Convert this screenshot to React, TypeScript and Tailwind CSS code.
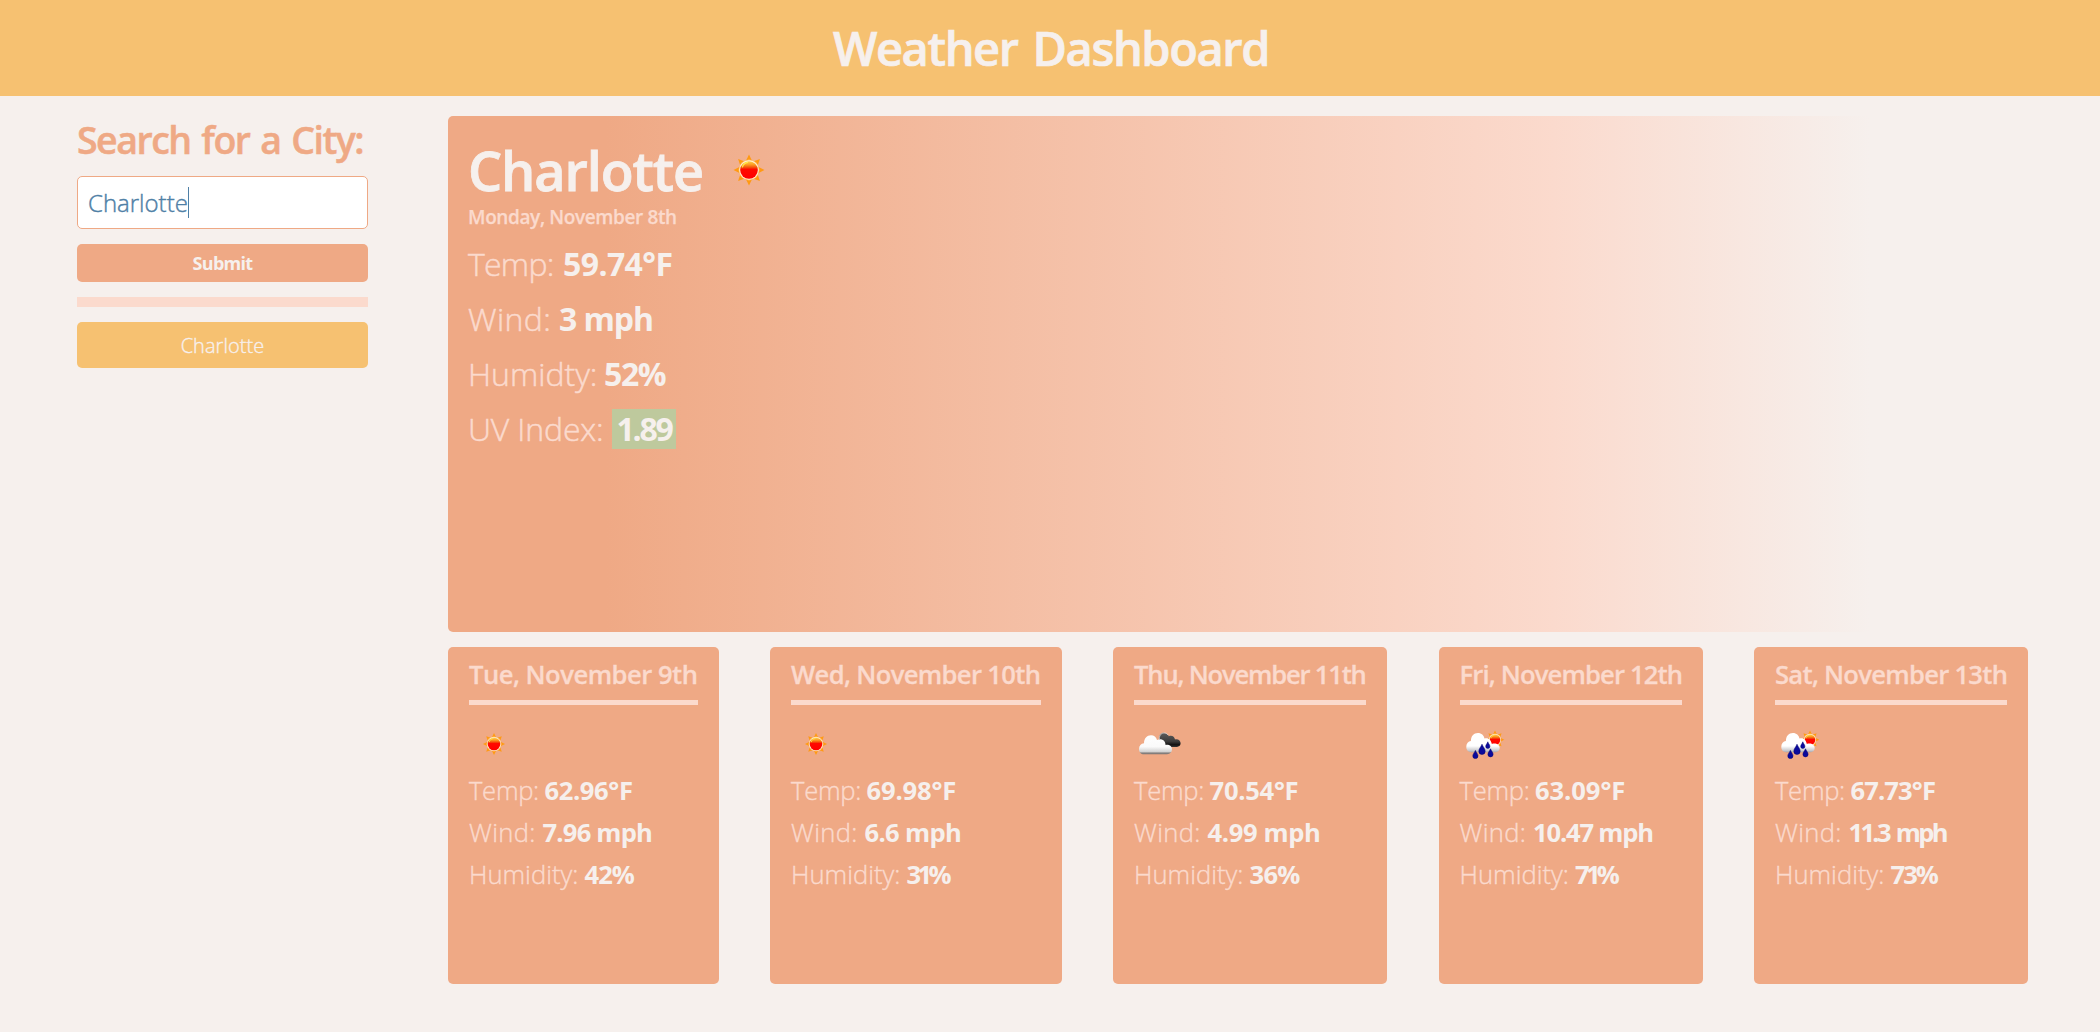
import React from "react";

function SunShape() {
  return (
    <>
      {[0, 45, 90, 135, 180, 225, 270, 315].map((a) => (
        <path key={a} d="M0 -15.4 L2.9 -9.6 L-2.9 -9.6 Z" fill="#ff9a12" transform={`rotate(${a})`} />
      ))}
      <circle r="10.2" fill="#fff0cf" stroke="#ffab45" strokeWidth="0.6" />
      <circle r="8.8" fill="url(#sunFill)" />
      <path d="M-6.6 -2.6 C-6 -5.6 -4 -7.2 -1 -7.6" fill="none" stroke="#ffe94a" strokeWidth="1.1" />
    </>
  );
}

function Defs() {
  return (
    <svg className="absolute h-0 w-0" aria-hidden="true">
      <defs>
        <linearGradient id="sunFill" x1="0" y1="0" x2="0" y2="1">
          <stop offset="0" stopColor="#ffcf50" />
          <stop offset="0.2" stopColor="#fb9a20" />
          <stop offset="0.36" stopColor="#f44c0c" />
          <stop offset="0.46" stopColor="#ff0a00" />
          <stop offset="1" stopColor="#ff0000" />
        </linearGradient>
        <linearGradient id="cloudFill" gradientUnits="userSpaceOnUse" x1="0" y1="0" x2="0" y2="19">
          <stop offset="0" stopColor="#ffffff" />
          <stop offset="0.6" stopColor="#fafafa" />
          <stop offset="0.86" stopColor="#d2d2d2" />
          <stop offset="0.93" stopColor="#8a8583" />
          <stop offset="1" stopColor="#777270" />
        </linearGradient>
        <linearGradient id="rainCloud" gradientUnits="userSpaceOnUse" x1="0" y1="0" x2="0" y2="20">
          <stop offset="0" stopColor="#ffffff" />
          <stop offset="0.65" stopColor="#ffffff" />
          <stop offset="0.9" stopColor="#c4c4c8" />
          <stop offset="1" stopColor="#8f8f94" />
        </linearGradient>
        <linearGradient id="darkCloud" x1="0" y1="0" x2="0" y2="1">
          <stop offset="0" stopColor="#5c5c5c" />
          <stop offset="0.6" stopColor="#3c3c3c" />
          <stop offset="0.85" stopColor="#111111" />
          <stop offset="1" stopColor="#333333" />
        </linearGradient>
      </defs>
    </svg>
  );
}

function Sun({ className }: { className: string }) {
  return (
    <svg viewBox="-35 -35 70 70" className={className}>
      <SunShape />
    </svg>
  );
}

function Clouds() {
  return (
    <svg viewBox="0 0 50 50" className="h-[50px] w-[50px]">
      <path d="M25 20 C25 15.5 27.5 13.6 30.5 13.9 C33 14.1 34.2 15.6 34.8 17.3 C38 16 40.5 17.8 41 20.4 C44.5 19.8 46.8 22 46.6 24.6 C46.4 27 44.8 27.9 43 27.9 L30 27.9 Z" fill="url(#darkCloud)" />
      <path d="M25.3 20 C25.3 15.8 27.6 13.8 30.5 14 C32 14.1 33.2 14.8 34 16" fill="none" stroke="#e8e2df" strokeWidth="0.8" />
      <g transform="translate(5 16.3)">
        <path d="M5 18.9 C1.8 18.9 0 16.6 0 13.6 C0 10.4 2 8.3 5 8 C5 3 8 0 12 0 C15 0 17.3 1.8 18 4.6 C22.5 2.8 26.3 5 26.6 9.6 C30.5 9 33 11.2 33 14 C33 17 31.2 18.9 28 18.9 Z" fill="url(#cloudFill)" />
      </g>
    </svg>
  );
}

function Rain() {
  return (
    <svg viewBox="0 0 50 50" className="h-[50px] w-[50px]">
      <g transform="translate(35 20.8) scale(0.6)">
        <SunShape />
      </g>
      <g transform="translate(6.3 14)">
        <path d="M5 19.2 C1.8 19.2 0 17 0 13.8 C0 10.6 2 8.3 4.6 8 C4.6 3 7.4 0 11.6 0 C15.2 0 17.6 2.4 18.2 5.6 C21.6 4.2 25 6.6 25.4 11 C29.6 9.6 33.4 11.8 33.4 15 C33.4 17.6 31.5 19.2 28.8 19.2 Z" fill="url(#rainCloud)" />
      </g>
      <g fill="#0a0a9c" stroke="#050570" strokeWidth="0.5">
        <path d="M22 25.2 C23.2 28.2 25.2 29.8 25.2 32.2 A3.2 3.3 0 0 1 18.8 32.2 C18.8 29.8 20.8 28.2 22 25.2 Z" />
        <path d="M27.8 22.8 C28.6 25 29.9 25.8 29.9 27.4 A2.1 2.1 0 0 1 25.7 27.4 C25.7 25.8 27 25 27.8 22.8 Z" />
        <path d="M15.4 31.4 C16.5 34 18 35 18 36.9 A2.6 2.6 0 0 1 12.8 36.9 C12.8 35 14.3 34 15.4 31.4 Z" />
        <path d="M30.5 29.8 C31.6 32.4 33.1 33.4 33.1 35.3 A2.6 2.6 0 0 1 27.9 35.3 C27.9 33.4 29.4 32.4 30.5 29.8 Z" />
      </g>
    </svg>
  );
}

type Value = { text: string; spacing: string };

function Stat({ label, width, value }: { label: string; width: string; value: Value }) {
  return (
    <p className="flex h-[42px] items-baseline text-[25.6px] leading-[42px]">
      <span className={`shrink-0 font-light text-[#fbdacd] [-webkit-text-stroke:0.4px] ${width}`}>{label}</span>
      <span className={`font-bold whitespace-nowrap text-[#f6f0ed] ${value.spacing}`}>{value.text}</span>
    </p>
  );
}

type Day = {
  date: string;
  dateSpacing: string;
  width: string;
  icon: "sun" | "clouds" | "rain";
  temp: Value;
  wind: Value;
  humidity: Value;
};

const days: Day[] = [
  {
    date: "Tue, November 9th", dateSpacing: "tracking-[-0.5px]", width: "w-[270.6px]", icon: "sun",
    temp: { text: "62.96°F", spacing: "tracking-[-0.4px]" },
    wind: { text: "7.96 mph", spacing: "tracking-[-0.8px]" },
    humidity: { text: "42%", spacing: "tracking-[-1px]" },
  },
  {
    date: "Wed, November 10th", dateSpacing: "tracking-[-0.65px]", width: "w-[291.6px]", icon: "sun",
    temp: { text: "69.98°F", spacing: "tracking-[-0.2px]" },
    wind: { text: "6.6 mph", spacing: "tracking-[-0.7px]" },
    humidity: { text: "31%", spacing: "tracking-[-3.6px]" },
  },
  {
    date: "Thu, November 11th", dateSpacing: "tracking-[-1.2px]", width: "w-[274px]", icon: "clouds",
    temp: { text: "70.54°F", spacing: "tracking-[-0.3px]" },
    wind: { text: "4.99 mph", spacing: "tracking-[-0.4px]" },
    humidity: { text: "36%", spacing: "tracking-[-0.8px]" },
  },
  {
    date: "Fri, November 12th", dateSpacing: "tracking-[-0.85px]", width: "w-[264px]", icon: "rain",
    temp: { text: "63.09°F", spacing: "tracking-[-0.1px]" },
    wind: { text: "10.47 mph", spacing: "tracking-[-1.2px]" },
    humidity: { text: "71%", spacing: "tracking-[-3.8px]" },
  },
  {
    date: "Sat, November 13th", dateSpacing: "tracking-[-0.72px]", width: "w-[274px]", icon: "rain",
    temp: { text: "67.73°F", spacing: "tracking-[-0.9px]" },
    wind: { text: "11.3 mph", spacing: "tracking-[-2.7px] [word-spacing:3px]" },
    humidity: { text: "73%", spacing: "tracking-[-2px]" },
  },
];

function DayCard({ day }: { day: Day }) {
  return (
    <article className={`h-[337px] rounded-[5px] bg-[#efa985] px-[21px] pt-[9px] ${day.width}`}>
      <h3 className={`box-content h-[43px] border-b-5 border-[#fbdacd] pt-px text-[25.6px] leading-9 font-semibold whitespace-nowrap text-[#fbdacd] [-webkit-text-stroke:0.3px] ${day.dateSpacing}`}>
        {day.date}
      </h3>
      <div className="h-[65px] pt-[14px]">
        {day.icon === "sun" && <Sun className="h-[50px] w-[50px]" />}
        {day.icon === "clouds" && <Clouds />}
        {day.icon === "rain" && <Rain />}
      </div>
      <Stat label="Temp:" width="w-[75.5px] tracking-[-0.3px]" value={day.temp} />
      <Stat label="Wind:" width="w-[73.5px] tracking-[0.3px]" value={day.wind} />
      <Stat label="Humidity:" width="w-[115.5px]" value={day.humidity} />
    </article>
  );
}

export default function App() {
  return (
    <div className="min-h-[1032px] bg-[#f6f0ed] font-['Open_Sans',sans-serif]">
      <Defs />
      <header className="flex h-24 items-center justify-center bg-[#f6c171]">
        <h1 className="pl-0.5 text-[47px] leading-[94px] font-semibold tracking-[-1.4px] text-[#f6f0ed] [-webkit-text-stroke:0.7px] [word-spacing:4px]">Weather Dashboard</h1>
      </header>
      <main className="flex pt-5">
        <aside className="ml-[77px] flex w-[291px] flex-col">
          <h2 className="h-[60px] text-[37.5px] leading-[47px] font-semibold tracking-[-1.5px] whitespace-nowrap text-[#efa985] [-webkit-text-stroke:0.5px] [word-spacing:2.5px]">
            Search for a City:
          </h2>
          <div className="flex h-[53px] items-center rounded-[5px] border border-[#efa985] bg-white px-2.5 text-[24px] text-[#4f80a6]">
            <span className="font-light [-webkit-text-stroke:0.4px]">Charlotte</span>
            <span className="h-[31px] w-px bg-[#4f80a6]" />
          </div>
          <button className="mt-[15px] h-[38px] rounded-[5px] bg-[#efa985] text-[18px] font-bold tracking-[-0.7px] text-[#f6f0ed]">
            Submit
          </button>
          <div className="mt-[15px] h-2.5 bg-[#fbdacd]" />
          <button className="mt-[15px] h-[46px] rounded-[5px] bg-[#f6c171] pt-0.5 text-[20px] font-light tracking-[0.05px] text-[#f6f0ed] [-webkit-text-stroke:0.35px]">
            Charlotte
          </button>
        </aside>
        <section className="ml-20 w-[1580px]">
          <div className="h-[516px] rounded-[5px] bg-[linear-gradient(90deg,#efa985_10%,#fbdacd_70%,#f6f0ed_90%)] px-5 pt-[23px]">
            <div className="flex h-[62px] items-center">
              <h2 className="text-[54px] leading-[62px] font-semibold tracking-[-1.1px] text-[#f6f0ed] [-webkit-text-stroke:0.8px]">Charlotte</h2>
              <Sun className="-mt-px ml-[11px] h-[70px] w-[70px]" />
            </div>
            <h3 className="h-[35px] pt-0.5 text-[19px] leading-[28px] font-semibold tracking-[-0.38px] text-[#fbdacd] [-webkit-text-stroke:0.25px]">Monday, November 8th</h3>
            <div className="text-[32px] leading-[55px] text-[#f6f0ed]">
              <p className="flex h-[55px]">
                <span className="w-[95px] font-light tracking-[-0.75px] text-[#fbdacd] [-webkit-text-stroke:0.5px]">Temp:</span>
                <span className="font-bold tracking-[-0.6px]">59.74°F</span>
              </p>
              <p className="flex h-[55px]">
                <span className="w-[91px] font-light tracking-[0.4px] text-[#fbdacd] [-webkit-text-stroke:0.5px]">Wind:</span>
                <span className="font-bold tracking-[-1.1px]">3 mph</span>
              </p>
              <p className="flex h-[55px]">
                <span className="w-[136px] font-light text-[#fbdacd] [-webkit-text-stroke:0.5px]">Humidty:</span>
                <span className="font-bold tracking-[-1.4px]">52%</span>
              </p>
              <p className="flex h-[55px]">
                <span className="w-[144px] font-light tracking-[-0.15px] text-[#fbdacd] [-webkit-text-stroke:0.5px]">UV Index:</span>
                <span className="mt-2 h-10 w-16 bg-[#bec99d] text-center leading-[39px] font-bold tracking-[-2.2px]">1.89</span>
              </p>
            </div>
          </div>
          <div className="mt-[15px] flex justify-between">
            {days.map((day) => (
              <DayCard key={day.date} day={day} />
            ))}
          </div>
        </section>
      </main>
    </div>
  );
}
